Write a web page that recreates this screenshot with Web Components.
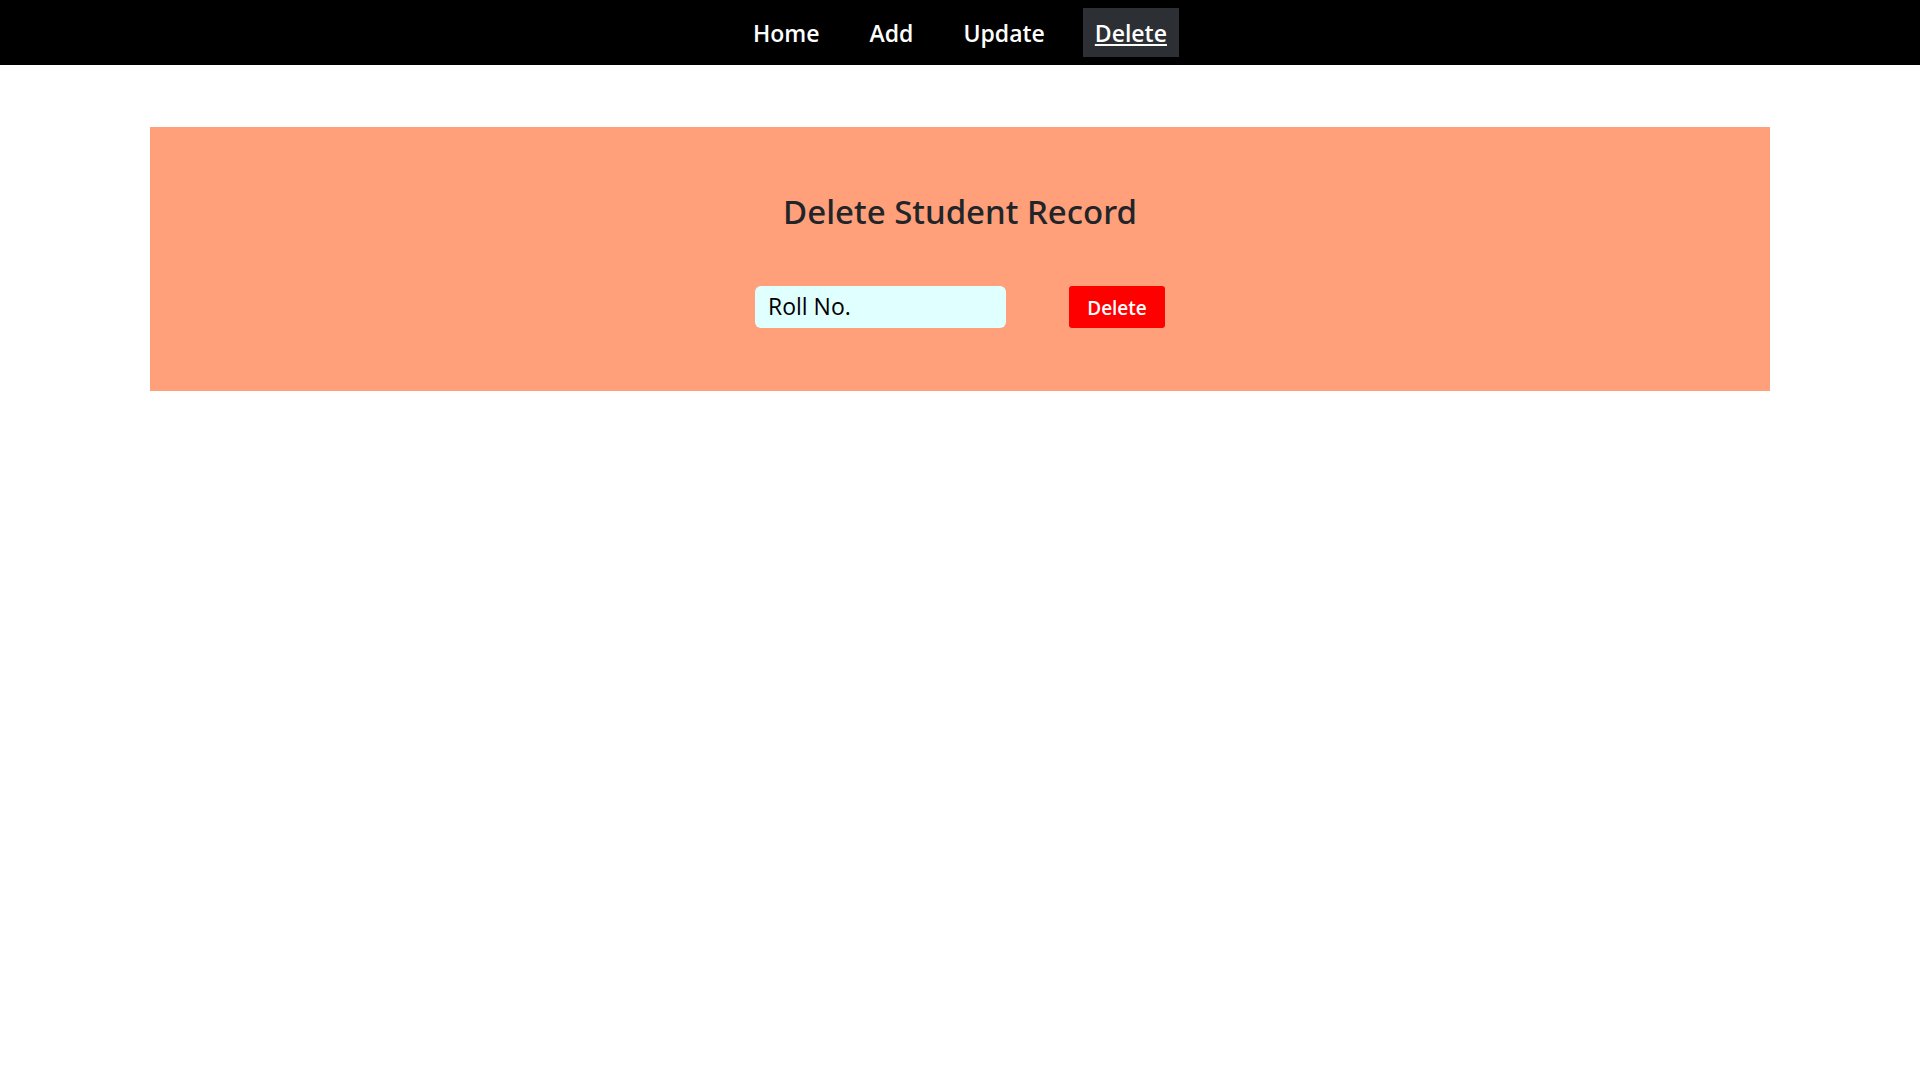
<!DOCTYPE html>
<html lang="en">
<head>
<meta charset="utf-8">
<title>Delete Student Record</title>
<style>
body { margin: 0; background: #fff; color: #212529; font-family: "Segoe UI", "Open Sans", "Noto Sans", sans-serif; }
</style>
</head>
<body>
<nav-bar>
  <nav-item href="#home">Home</nav-item>
  <nav-item href="#add">Add</nav-item>
  <nav-item href="#update">Update</nav-item>
  <nav-item href="#delete" active>Delete</nav-item>
</nav-bar>
<record-panel>
  <span slot="title">Delete Student Record</span>
  <delete-form></delete-form>
</record-panel>
<script>
class NavBar extends HTMLElement {
  constructor() {
    super();
    this.attachShadow({ mode: "open" }).innerHTML = `
      <style>
        :host { display: block; background: #000; }
        nav { display: flex; justify-content: center; gap: 26px; padding: 8px 0; }
      </style>
      <nav aria-label="Main"><slot></slot></nav>`;
  }
}
class NavItem extends HTMLElement {
  constructor() {
    super();
    this.attachShadow({ mode: "open" }).innerHTML = `
      <style>
        :host { display: block; }
        a { display: block; padding: 9px 12px 7px; color: #fff; font-size: 23px; font-weight: 600; line-height: 33px; text-decoration: none; }
        :host([active]) a { background: #2c2f34; text-decoration: underline; text-decoration-thickness: 2px; text-underline-offset: 2px; }
      </style>
      <a><slot></slot></a>`;
  }
  connectedCallback() {
    const link = this.shadowRoot.querySelector("a");
    link.href = this.getAttribute("href");
    if (this.hasAttribute("active")) link.setAttribute("aria-current", "page");
  }
}
class RecordPanel extends HTMLElement {
  constructor() {
    super();
    this.attachShadow({ mode: "open" }).innerHTML = `
      <style>
        :host { display: block; margin: 62px 150px; padding: 63px 0; background: #ffa07a; }
        h1 { margin: 0 0 52px; text-align: center; font-family: "Noto Sans", sans-serif; font-size: 33px; font-weight: 500; line-height: 44px; }
      </style>
      <h1><slot name="title"></slot></h1>
      <slot></slot>`;
  }
}
class DeleteForm extends HTMLElement {
  constructor() {
    super();
    this.attachShadow({ mode: "open" }).innerHTML = `
      <style>
        :host { display: block; }
        form { display: flex; justify-content: center; gap: 63px; }
        input, button { box-sizing: border-box; height: 42px; margin: 0; border: 0; font-family: inherit; }
        input { width: 251px; padding: 0 13px 2px; border-radius: 6px; background: #e0ffff; color: #000; font-size: 23px; }
        input::placeholder { color: #000; opacity: 1; }
        button { width: 96px; padding: 2px 0 0; border-radius: 3px; background: #f00; color: #fff; font-size: 19px; font-weight: 600; }
      </style>
      <form>
        <input type="text" aria-label="Roll No." placeholder="Roll No.">
        <button type="button">Delete</button>
      </form>`;
  }
}
customElements.define("nav-bar", NavBar);
customElements.define("nav-item", NavItem);
customElements.define("record-panel", RecordPanel);
customElements.define("delete-form", DeleteForm);
</script>
</body>
</html>
